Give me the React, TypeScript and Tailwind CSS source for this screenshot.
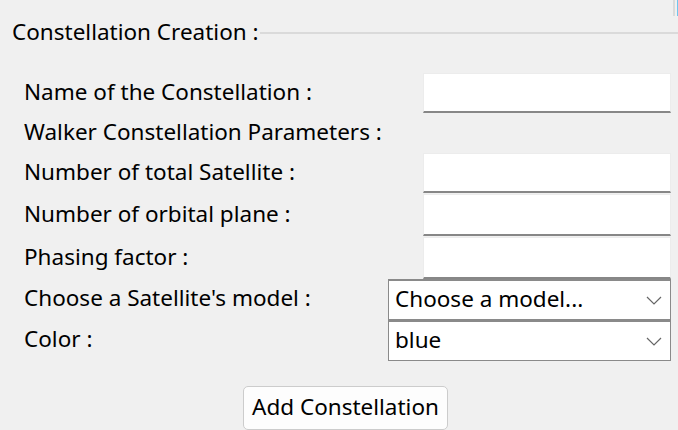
const font = { fontFamily: '"Noto Sans", "Open Sans", sans-serif' };

function Chevron() {
  return (
    <svg width="16" height="9" viewBox="0 0 16 9" fill="none" stroke="#666666" strokeWidth="1.2">
      <polyline points="1,1 8,8 15,1" />
    </svg>
  );
}

function TextRow({ label, h }: { label: string; h: string }) {
  return (
    <div className={`flex items-center ${h}`}>
      <span className="w-[423px] shrink-0 pb-[3px] pl-[24px]">{label}</span>
      <div className="h-full w-[248px] border border-[#ececec] border-b-2 border-b-[#878787] bg-white" />
    </div>
  );
}

function SelectRow({ label, value, h }: { label: string; value: string; h: string }) {
  return (
    <div className={`flex items-center ${h}`}>
      <span className="w-[388px] shrink-0 pb-[3px] pl-[24px]">{label}</span>
      <div className="flex h-full w-[283px] items-center justify-between border border-[#8a8a8a] border-t-2 bg-white pl-[6px] pr-[8px]">
        <span className="pb-[3px]">{value}</span>
        <Chevron />
      </div>
    </div>
  );
}

export default function App() {
  return (
    <div className="relative h-[430px] w-[678px] overflow-hidden bg-[#f0f0f0] text-[22.5px] text-black" style={font}>
      <div className="absolute right-[3px] top-0 h-[16px] w-[2px] bg-[#dadada]" />
      <div className="absolute right-0 top-0 h-[16px] w-[1px] bg-[#6ec6f0]" />

      <div className="flex h-[47px] items-end">
        <div className="flex h-[28px] w-full items-center pl-[12px]">
          <span className="pb-[3px] pr-[1px]">Constellation Creation :</span>
          <div className="h-[2px] flex-1 bg-[#dadada]" />
        </div>
      </div>

      <div className="mt-[26px] flex flex-col">
        <TextRow label="Name of the Constellation :" h="h-[40px]" />
        <div className="flex h-[40px] items-center pb-[3px] pl-[24px]">Walker Constellation Parameters :</div>
        <TextRow label="Number of total Satellite :" h="h-[40px]" />
        <div className="h-[1px]" />
        <TextRow label="Number of orbital plane :" h="h-[42px]" />
        <div className="h-[1px]" />
        <TextRow label="Phasing factor :" h="h-[42px]" />
        <SelectRow label="Choose a Satellite's model :" value="Choose a model..." h="h-[41px]" />
        <SelectRow label="Color :" value="blue" h="h-[41px]" />
      </div>

      <div className="mt-[25px] flex justify-center pl-[13px]">
        <button className="h-[44px] w-[205px] rounded-[5px] border border-[#cccccc] bg-[#fdfdfd] pb-[2px]">
          Add Constellation
        </button>
      </div>
    </div>
  );
}
